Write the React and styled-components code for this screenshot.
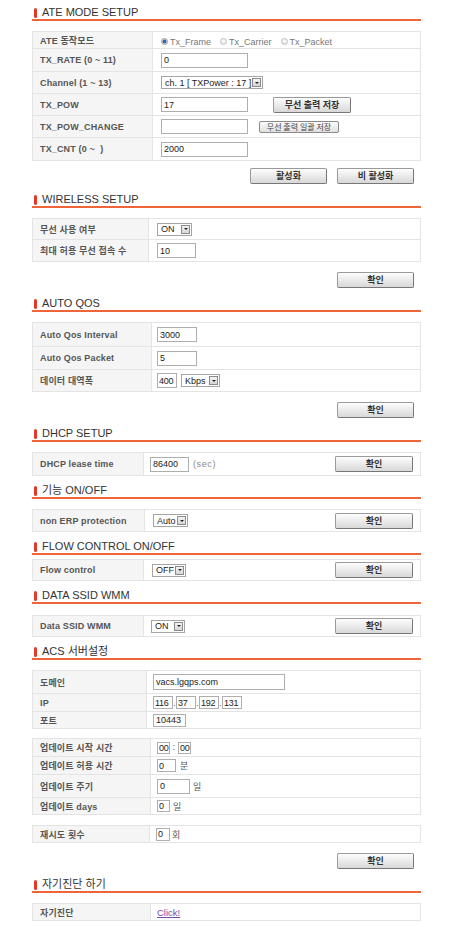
import React from 'react'
import styled, { createGlobalStyle, css } from 'styled-components'

const GlobalStyle = createGlobalStyle`
  html, body {
    margin: 0;
    padding: 0;
    background: #fff;
  }
  body {
    font-family: "Liberation Sans", Arial, "Noto Sans CJK KR", sans-serif;
    color: #333;
  }
  * {
    box-sizing: border-box;
  }
`

const Page = styled.div`
  width: 389px;
  margin-left: 32px;
  padding-top: 6px;
  padding-bottom: 4px;
`

const Section = styled.section`
  & + & {
    margin-top: 8px;
  }
`

const Title = styled.h2`
  margin: 0;
  height: 15px;
  display: flex;
  align-items: center;
  padding-left: 2px;
  font-size: 11px;
  line-height: 13px;
  font-weight: normal;
  color: #333;
  border-bottom: 2px solid #f0643a;
  &::before {
    content: '';
    width: 3px;
    height: 10px;
    border-radius: 2px;
    background: #e2392b;
    margin-right: 5px;
  }
`

const Row = styled.div`
  display: grid;
  height: ${p => p.$h}px;
  & + & {
    border-top: 1px solid #e4e4e4;
  }
`

const Label = styled.div`
  display: flex;
  align-items: center;
  padding-left: 7px;
  background: #f5f5f5;
  border-right: 1px solid #e4e4e4;
  font-size: 9px;
  font-weight: bold;
  letter-spacing: 0.15px;
  color: #555;
  white-space: nowrap;
`

const Value = styled.div`
  display: flex;
  align-items: center;
  padding-right: 7px;
  font-size: 9px;
  color: #333;
  white-space: nowrap;
`

const Table = styled.div`
  margin-top: ${p => p.$mt ?? 10}px;
  border: 1px solid #e4e4e4;
  & > ${Row} {
    grid-template-columns: ${p => p.$lw}px 1fr;
  }
  & ${Value} {
    padding-left: ${p => p.$pad}px;
  }
`

const Field = styled.input`
  width: ${p => p.$w}px;
  height: ${p => p.$h ?? 15}px;
  margin: 0;
  padding: 0 ${p => (p.$w < 25 ? 0 : 2)}px 0 ${p => (p.$w < 25 ? 1 : 2)}px;
  border: 1px solid #aeaeae;
  background: #fff;
  font-family: "Liberation Sans", Arial, sans-serif;
  font-size: 9px;
  letter-spacing: ${p => (p.$w < 25 ? '-0.3px' : '0')};
  color: #222;
  outline: none;
`

const Select = styled.div`
  display: inline-flex;
  align-items: center;
  width: ${p => p.$w}px;
  height: 13px;
  margin-left: ${p => p.$ml ?? 0}px;
  padding-left: 3px;
  border: 1px solid #a5a5a5;
  background: #fff;
  font-size: 9px;
  color: #222;
  white-space: nowrap;
`

const Arrow = styled.span`
  flex-shrink: 0;
  margin-left: auto;
  margin-right: 1px;
  width: 9px;
  height: 9px;
  display: flex;
  align-items: center;
  justify-content: center;
  border: 1px solid #8a8a8a;
  background: linear-gradient(#f4f4f4, #d6d6d6);
  &::after {
    content: '';
    border-left: 2px solid transparent;
    border-right: 2px solid transparent;
    border-top: 2px solid #222;
  }
`

const Radios = styled.div`
  display: flex;
  align-items: center;
  gap: 9px;
  margin-top: 3px;
`

const RadioItem = styled.span`
  display: flex;
  align-items: center;
  gap: 2px;
  color: #777;
  font-size: 9px;
`

const RadioDot = styled.span`
  width: 7px;
  height: 7px;
  border-radius: 50%;
  border: 1px solid #c2c2c2;
  background: radial-gradient(circle at 50% 40%, #fff, #dadada);
  ${p => p.$on && css`
    border-color: #9a9a9a;
    background: radial-gradient(circle, #2b67b5 0 1.5px, #c9d2dc 2.2px, #eee 100%);
  `}
`

const Button = styled.button`
  width: ${p => p.$w ?? 78}px;
  height: 16px;
  margin: 0;
  margin-left: ${p => (p.$auto ? 'auto' : `${p.$ml ?? 0}px`)};
  padding: 0;
  border: 1px solid #9a9a9a;
  border-right-color: #777;
  border-bottom-color: #777;
  border-radius: 2px;
  background: linear-gradient(#fdfdfd, #d8d8d8);
  font-family: "Liberation Sans", "Noto Sans CJK KR", sans-serif;
  font-size: 9px;
  font-weight: bold;
  line-height: 14px;
  color: #333;
`

const SmallButton = styled.button`
  width: 80px;
  height: 12px;
  margin: 0 0 0 ${p => p.$ml}px;
  padding: 0;
  border: 1px solid #8a8a8a;
  border-radius: 2px;
  background: linear-gradient(#fbfbfb, #e0e0e0);
  font-family: "Noto Sans CJK KR", sans-serif;
  font-size: 8px;
  line-height: 10px;
  color: #444;
`

const ButtonRow = styled.div`
  display: flex;
  justify-content: flex-end;
  gap: 10px;
  margin-top: ${p => p.$mt ?? 10}px;
  padding-right: 7px;
  padding-bottom: 1px;
`

const Unit = styled.span`
  margin-left: ${p => p.$ml ?? 3}px;
  color: ${p => p.$muted ? '#888' : '#555'};
  letter-spacing: ${p => p.$muted ? '0.6px' : '0'};
`

const Sep = styled.span`
  width: ${p => p.$w ?? 3}px;
  text-align: center;
  color: #555;
  align-self: ${p => p.$low ? 'flex-end' : 'center'};
  margin-bottom: ${p => p.$low ? '3px' : '0'};
  line-height: 9px;
`

const Link = styled.a`
  color: #7b4ba8;
  text-decoration: underline;
  font-size: 9.5px;
  cursor: pointer;
`

const Dropdown = ({ w, ml, children }) => (
  <Select $w={w} $ml={ml}>
    {children}
    <Arrow />
  </Select>
)

const Input = ({ w, h, v = '' }) => <Field $w={w} $h={h} value={v} readOnly />

const ConfirmRow = ({ mt }) => (
  <ButtonRow $mt={mt}>
    <Button $w={77}>확인</Button>
  </ButtonRow>
)

export default function App() {
  return (
    <>
      <GlobalStyle />
      <Page>
        <Section>
          <Title>ATE MODE SETUP</Title>
          <Table $lw={120} $pad={8}>
            <Row $h={16}>
              <Label>ATE 동작모드</Label>
              <Value>
                <Radios>
                  <RadioItem><RadioDot $on />Tx_Frame</RadioItem>
                  <RadioItem><RadioDot />Tx_Carrier</RadioItem>
                  <RadioItem><RadioDot />Tx_Packet</RadioItem>
                </Radios>
              </Value>
            </Row>
            <Row $h={23}>
              <Label>TX_RATE (0 ~ 11)</Label>
              <Value><Input w={87} v="0" /></Value>
            </Row>
            <Row $h={22}>
              <Label>Channel (1 ~ 13)</Label>
              <Value><Dropdown w={102}>ch. 1 [ TXPower : 17 ]</Dropdown></Value>
            </Row>
            <Row $h={22}>
              <Label>TX_POW</Label>
              <Value>
                <Input w={87} v="17" />
                <Button $ml={25}>무선 출력 저장</Button>
              </Value>
            </Row>
            <Row $h={22}>
              <Label>TX_POW_CHANGE</Label>
              <Value>
                <Input w={87} />
                <SmallButton $ml={11}>무선 출력 일괄 저장</SmallButton>
              </Value>
            </Row>
            <Row $h={23}>
              <Label>TX_CNT (0 ~&nbsp; )</Label>
              <Value><Input w={87} v="2000" /></Value>
            </Row>
          </Table>
          <ButtonRow $mt={7}>
            <Button $w={77}>활성화</Button>
            <Button $w={77}>비 활성화</Button>
          </ButtonRow>
        </Section>

        <Section>
          <Title>WIRELESS SETUP</Title>
          <Table $lw={116} $pad={8}>
            <Row $h={20}>
              <Label>무선 사용 여부</Label>
              <Value><Dropdown w={35}>ON</Dropdown></Value>
            </Row>
            <Row $h={22}>
              <Label>최대 허용 무선 접속 수</Label>
              <Value><Input w={39} v="10" /></Value>
            </Row>
          </Table>
          <ConfirmRow />
        </Section>

        <Section>
          <Title>AUTO QOS</Title>
          <Table $lw={119} $pad={5}>
            <Row $h={23}>
              <Label>Auto Qos Interval</Label>
              <Value><Input w={40} v="3000" /></Value>
            </Row>
            <Row $h={23}>
              <Label>Auto Qos Packet</Label>
              <Value><Input w={40} v="5" /></Value>
            </Row>
            <Row $h={22}>
              <Label>데이터 대역폭</Label>
              <Value>
                <Input w={20} v="400" />
                <Dropdown w={39} ml={4}>Kbps</Dropdown>
              </Value>
            </Row>
          </Table>
          <ConfirmRow />
        </Section>

        <Section>
          <Title>DHCP SETUP</Title>
          <Table $lw={111} $pad={6}>
            <Row $h={22}>
              <Label>DHCP lease time</Label>
              <Value>
                <Input w={39} v="86400" />
                <Unit $ml={4} $muted>(sec)</Unit>
                <Button $auto>확인</Button>
              </Value>
            </Row>
          </Table>
        </Section>

        <Section>
          <Title>기능 ON/OFF</Title>
          <Table $lw={112} $pad={8}>
            <Row $h={21}>
              <Label>non ERP protection</Label>
              <Value>
                <Dropdown w={35}>Auto</Dropdown>
                <Button $auto>확인</Button>
              </Value>
            </Row>
          </Table>
        </Section>

        <Section>
          <Title>FLOW CONTROL ON/OFF</Title>
          <Table $lw={111} $pad={8} $mt={4}>
            <Row $h={20}>
              <Label>Flow control</Label>
              <Value>
                <Dropdown w={34}>OFF</Dropdown>
                <Button $auto>확인</Button>
              </Value>
            </Row>
          </Table>
        </Section>

        <Section>
          <Title>DATA SSID WMM</Title>
          <Table $lw={111} $pad={7} $mt={11}>
            <Row $h={20}>
              <Label>Data SSID WMM</Label>
              <Value>
                <Dropdown w={34}>ON</Dropdown>
                <Button $auto>확인</Button>
              </Value>
            </Row>
          </Table>
        </Section>

        <Section>
          <Title>ACS 서버설정</Title>
          <Table $lw={114} $pad={6}>
            <Row $h={22}>
              <Label>도메인</Label>
              <Value><Input w={132} h={16} v="vacs.lgqps.com" /></Value>
            </Row>
            <Row $h={18}>
              <Label>IP</Label>
              <Value>
                <Input w={20} h={13} v="116" />
                <Sep $low>.</Sep>
                <Input w={20} h={13} v="37" />
                <Sep $low>.</Sep>
                <Input w={20} h={13} v="192" />
                <Sep $low>.</Sep>
                <Input w={20} h={13} v="131" />
              </Value>
            </Row>
            <Row $h={17}>
              <Label>포트</Label>
              <Value><Input w={33} h={13} v="10443" /></Value>
            </Row>
          </Table>
          <Table $lw={118} $pad={6} $mt={9}>
            <Row $h={17}>
              <Label>업데이트 시작 시간</Label>
              <Value>
                <Input w={13} h={12} v="00" />
                <Sep $w={8}>:</Sep>
                <Input w={13} h={12} v="00" />
              </Value>
            </Row>
            <Row $h={18}>
              <Label>업데이트 허용 시간</Label>
              <Value>
                <Input w={19} h={13} v="0" />
                <Unit $ml={4}>분</Unit>
              </Value>
            </Row>
            <Row $h={23}>
              <Label>업데이트 주기</Label>
              <Value>
                <Input w={33} h={15} v="0" />
                <Unit>일</Unit>
              </Value>
            </Row>
            <Row $h={17}>
              <Label>업데이트 days</Label>
              <Value>
                <Input w={13} h={12} v="0" />
                <Unit>일</Unit>
              </Value>
            </Row>
          </Table>
          <Table $lw={117} $pad={6}>
            <Row $h={16}>
              <Label>재시도 횟수</Label>
              <Value>
                <Input w={14} h={13} v="0" />
                <Unit $ml={2}>회</Unit>
              </Value>
            </Row>
          </Table>
          <ConfirmRow />
        </Section>

        <Section>
          <Title>자기진단 하기</Title>
          <Table $lw={118} $pad={6}>
            <Row $h={16}>
              <Label>자기진단</Label>
              <Value><Link>Click!</Link></Value>
            </Row>
          </Table>
        </Section>
      </Page>
    </>
  )
}
